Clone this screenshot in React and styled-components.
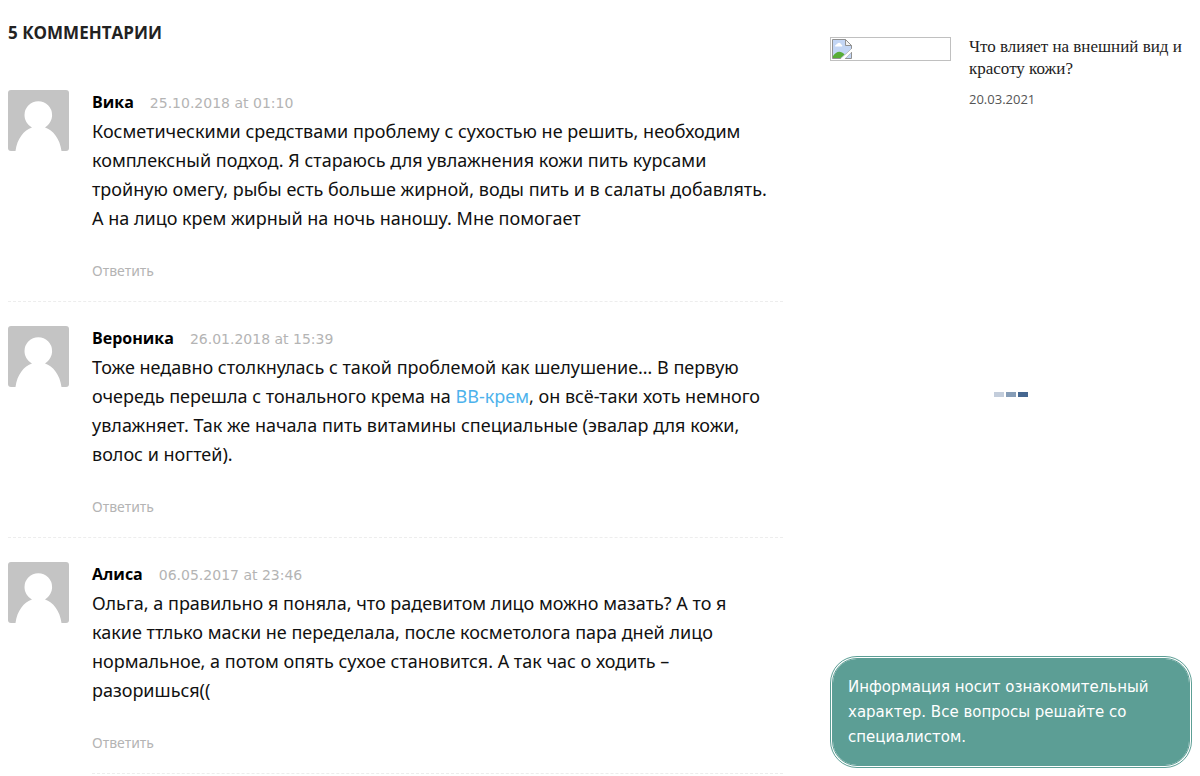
import React from 'react';
import styled, { createGlobalStyle } from 'styled-components';

const bodyFont = '"Noto Sans", Verdana, sans-serif';
const wideFont = '"DejaVu Sans", Verdana, sans-serif';
const uiFont = '"Open Sans", sans-serif';

const GlobalStyle = createGlobalStyle`
  * { box-sizing: border-box; }
  body { margin: 0; background: #fff; color: #111; font-family: ${bodyFont}; }
`;

const Page = styled.div`
  display: grid;
  grid-template-columns: minmax(0, 1fr) 362px;
  column-gap: 47px;
  padding: 0 8px;
`;

const Heading = styled.h2`
  margin: 0;
  padding: 21px 0;
  font: 700 17px/24px ${uiFont};
  color: #222;
  text-transform: uppercase;
`;

const CommentList = styled.ol`
  margin: 0;
  padding: 0;
  list-style: none;
`;

const Comment = styled.li`
  display: grid;
  grid-template-columns: 61px minmax(0, 1fr);
  column-gap: 23px;
  padding-top: 24px;
  border-bottom: ${(p) => (p.$thread ? '0' : '1px dashed #ededed')};
`;

const Avatar = styled.svg`
  display: block;
  width: 61px;
  height: 61px;
  border-radius: 3px;
`;

const CommentBody = styled.div`
  padding-bottom: 18px;
  border-bottom: ${(p) => (p.$thread ? '1px dashed #ededed' : '0')};
`;

const Meta = styled.header`
  display: flex;
  align-items: baseline;
  gap: 16px;
  height: 27px;
  line-height: 24px;
`;

const Author = styled.strong`
  font: 700 16px/24px ${uiFont};
  color: #000;
`;

const Posted = styled.time`
  font: 14px/24px ${wideFont};
  color: #b4b4b4;
`;

const Text = styled.p`
  margin: 0 0 26px;
  padding-right: 8px;
  font-size: 18px;
  line-height: 29px;
`;

const TextLink = styled.a`
  color: #4db2ec;
  text-decoration: none;
`;

const Reply = styled.a`
  display: block;
  width: max-content;
  font-size: 14px;
  line-height: 24px;
  color: #b4b4b4;
  text-decoration: none;
`;

const Sidebar = styled.aside`
  padding-top: 36px;
`;

const Article = styled.article`
  display: grid;
  grid-template-columns: 121px minmax(0, 1fr);
  column-gap: 18px;
`;

const Thumb = styled.a`
  display: block;
  height: 24px;
  margin-top: 1px;
  padding: 1px;
  border: 1px solid #c0c0c0;
`;

const BrokenIcon = styled.svg`
  display: block;
`;

const ArticleTitle = styled.h3`
  margin: 0 0 7px;
  font: 400 17px/22px "Liberation Serif", serif;
`;

const TitleLink = styled.a`
  color: #222;
  text-decoration: none;
`;

const ArticleDate = styled.time`
  display: block;
  font: 13px/24px ${uiFont};
  color: #555;
`;

const Loader = styled.div`
  display: flex;
  align-items: center;
  justify-content: center;
  gap: 2px;
  height: 545px;
  padding-top: 22px;
`;

const Bar = styled.span`
  width: 10px;
  height: 5px;
  background: ${(p) => p.$color};
`;

const Notice = styled.p`
  margin: 0;
  padding: 16px 15px 15px;
  border: 3px double #5c9e95;
  border-radius: 27px;
  background: #5c9e95;
  background-clip: padding-box;
  color: #fff;
  font: 15px/25px ${wideFont};
`;

const comments = [
  {
    author: 'Вика',
    posted: '25.10.2018 at 01:10',
    text: 'Косметическими средствами проблему с сухостью не решить, необходим комплексный подход. Я стараюсь для увлажнения кожи пить курсами тройную омегу, рыбы есть больше жирной, воды пить и в салаты добавлять. А на лицо крем жирный на ночь наношу. Мне помогает',
  },
  {
    author: 'Вероника',
    posted: '26.01.2018 at 15:39',
    text: (
      <>
        Тоже недавно столкнулась с такой проблемой как шелушение… В первую очередь перешла с
        тонального крема на <TextLink href="#bb">BB-крем</TextLink>, он всё-таки хоть немного
        увлажняет. Так же начала пить витамины специальные (эвалар для кожи, волос и ногтей).
      </>
    ),
  },
  {
    author: 'Алиса',
    posted: '06.05.2017 at 23:46',
    text: 'Ольга, а правильно я поняла, что радевитом лицо можно мазать? А то я какие ттлько маски не переделала, после косметолога пара дней лицо нормальное, а потом опять сухое становится. А так час о ходить – разоришься((',
    thread: true,
  },
];

function Person() {
  return (
    <Avatar viewBox="0 0 61 61" aria-hidden="true">
      <rect width="61" height="61" fill="#c4c4c4" />
      <path d="M7.5 61C9 49 16 40 24 37.500C19 34.500 16.500 30 16.500 25A13.800 13.800 0 0 1 44.100 25C44.100 30 41.500 34.500 37 37.500C45 40 52 49 53.500 61Z" fill="#fff" />
    </Avatar>
  );
}

function BrokenImage() {
  return (
    <BrokenIcon width="20" height="20" viewBox="0 0 20 20" aria-hidden="true">
      <path d="M.5.5H13.500L19.500 6.500V10L9 19.500H.5Z" fill="#c3d6f5" stroke="#919191" />
      <path d="M3 7.500C3 5.500 5 5.500 5.500 4.500C7 2.800 9 4 9 5.500C10.500 5.500 10.500 7.500 10 7.500Z" fill="#fff" />
      <path d="M1 19V17C4 12 9 11 12.500 15.500L8.500 19Z" fill="#57ad36" />
      <path d="M13.500.5V6.500H19.500Z" fill="#f3f3f3" stroke="#919191" />
      <path d="M19.500 13V19.500H13Z" fill="#c3d6f5" stroke="#919191" />
      <path d="M20 9.500V12.500L12.500 20H8.500Z" fill="#fff" />
    </BrokenIcon>
  );
}

export default function App() {
  return (
    <>
      <GlobalStyle />
      <Page>
        <main>
          <Heading>5 комментарии</Heading>
          <CommentList>
            {comments.map((c) => (
              <Comment key={c.author} $thread={c.thread}>
                <Person />
                <CommentBody $thread={c.thread}>
                  <Meta>
                    <Author>{c.author}</Author>
                    <Posted>{c.posted}</Posted>
                  </Meta>
                  <Text>{c.text}</Text>
                  <Reply href="#respond">Ответить</Reply>
                </CommentBody>
              </Comment>
            ))}
          </CommentList>
        </main>
        <Sidebar>
          <Article>
            <Thumb href="#article" aria-label="Что влияет на внешний вид и красоту кожи?">
              <BrokenImage />
            </Thumb>
            <div>
              <ArticleTitle>
                <TitleLink href="#article">Что влияет на внешний вид и красоту кожи?</TitleLink>
              </ArticleTitle>
              <ArticleDate>20.03.2021</ArticleDate>
            </div>
          </Article>
          <Loader role="status" aria-label="Загрузка">
            <Bar $color="#c3cddb" />
            <Bar $color="#869db7" />
            <Bar $color="#456790" />
          </Loader>
          <Notice>
            Информация носит ознакомительный характер. Все вопросы решайте со специалистом.
          </Notice>
        </Sidebar>
      </Page>
    </>
  );
}
